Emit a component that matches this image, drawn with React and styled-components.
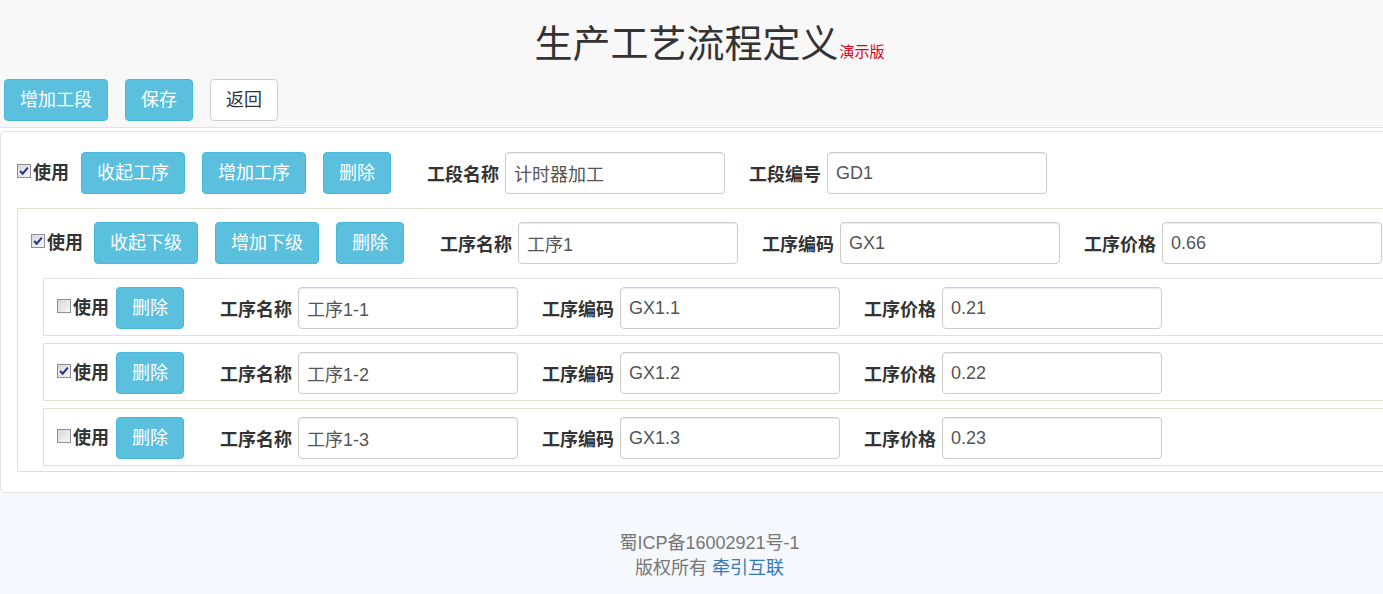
import React from 'react'
import styled, { createGlobalStyle } from 'styled-components'

const GlobalStyle = createGlobalStyle`
  html, body {
    margin: 0;
    padding: 0;
    overflow: hidden;
    background: #f5f8fc;
  }
  body {
    font-family: "Liberation Sans", "Noto Sans CJK SC", sans-serif;
    color: #333;
  }
`;

const Header = styled.div`
  background: #f8f8f8;
  border-bottom: 1px solid #dbe5ee;
  padding: 25px 0 6px 4px;
`;
const TitleWrap = styled.div`
  display: flex;
  justify-content: center;
  padding-right: 14px;
`;
const Title = styled.h1`
  position: relative;
  margin: 0;
  font-size: 38px;
  line-height: 38px;
  font-weight: normal;
  color: #333;
`;
const Demo = styled.small`
  position: absolute;
  left: 100%;
  bottom: 4px;
  margin-left: 1px;
  font-size: 15px;
  line-height: 15px;
  color: #e0001b;
  white-space: nowrap;
`;
const Toolbar = styled.div`
  display: flex;
  gap: 17px;
  margin-top: 16px;
`;
const Button = styled.button`
  height: 42px;
  padding: 0 15px;
  margin-left: ${p => p.$ml || 0}px;
  border: 1px solid ${p => (p.$plain ? '#ccc' : '#46b8da')};
  border-radius: 4px;
  background: ${p => (p.$plain ? '#fff' : '#5bc0de')};
  color: ${p => (p.$plain ? '#333' : '#fff')};
  font-family: inherit;
  font-size: 18px;
  line-height: 40px;
  white-space: nowrap;
  flex-shrink: 0;
`;

const Main = styled.div`
  background: #fff;
  padding-top: 3px;
`;
const Panel = styled.div`
  width: 1420px;
  border: 1px solid #e3e3e3;
  border-radius: 4px;
  background: #fff;
  padding: 20px 0 20px 16px;
  box-sizing: border-box;
`;
const Row = styled.div`
  display: flex;
  align-items: center;
  height: 42px;
`;
const Check = styled.label`
  display: flex;
  align-items: center;
  gap: 2px;
  font-size: 18px;
  font-weight: bold;
  line-height: 24px;
  white-space: nowrap;
  flex-shrink: 0;
`;
const Box = styled.span`
  width: 14px;
  height: 14px;
  box-sizing: border-box;
  border: 1px solid #8d8f94;
  background: linear-gradient(135deg, #d8d8d8, #f7f7f7);
  margin-bottom: 4px;
  display: flex;
  align-items: center;
  justify-content: center;
`;
const Fields = styled.div`
  display: flex;
  gap: 24px;
  margin-left: 36px;
`;
const Field = styled.label`
  display: flex;
  align-items: center;
  gap: 6px;
  flex-shrink: 0;
`;
const FieldLabel = styled.span`
  font-size: 18px;
  font-weight: bold;
  white-space: nowrap;
`;
const Input = styled.input`
  width: 220px;
  height: 42px;
  box-sizing: border-box;
  padding: 0 8px;
  border: 1px solid #ccc;
  border-radius: 4px;
  box-shadow: inset 0 1px 1px rgba(0, 0, 0, 0.075);
  font-family: inherit;
  font-size: 18px;
  color: #555;
  background: #fff;
  outline: none;
`;
const Group = styled.div`
  margin-top: 14px;
  border: 1px solid #dfe3d4;
  padding: 13px 0 5px 13px;
`;
const SubList = styled.div`
  display: flex;
  flex-direction: column;
  gap: 7px;
  margin: 14px 0 0 12px;
`;
const SubItem = styled.div`
  border: 1px solid #dfe3d4;
  padding: 8px 0 6px 13px;
`;

const Footer = styled.div`
  padding: 38px 0 13px 36px;
  text-align: center;
  font-size: 18px;
  line-height: 25px;
  color: #777;
`;
const FooterLink = styled.a`
  color: #337ab7;
  text-decoration: none;
`;

function CheckBox({ checked, children }) {
  return (
    <Check>
      <Box>
        {checked && (
          <svg width="12" height="12" viewBox="0 0 11 11">
            <path d="M2 5.5 L4.3 8 L9 2.5" fill="none" stroke="#27328a" strokeWidth="1.8" />
          </svg>
        )}
      </Box>
      {children}
    </Check>
  );
}

function InputField({ label, value }) {
  return (
    <Field>
      <FieldLabel>{label}</FieldLabel>
      <Input defaultValue={value} readOnly />
    </Field>
  );
}

const stage = {
  name: '计时器加工',
  code: 'GD1',
  process: {
    name: '工序1',
    code: 'GX1',
    price: '0.66',
    children: [
      { name: '工序1-1', code: 'GX1.1', price: '0.21', checked: false },
      { name: '工序1-2', code: 'GX1.2', price: '0.22', checked: true },
      { name: '工序1-3', code: 'GX1.3', price: '0.23', checked: false },
    ],
  },
};

export default function App() {
  const { process } = stage;
  return (
    <>
      <GlobalStyle />
      <Header>
        <TitleWrap>
          <Title>
            生产工艺流程定义<Demo>演示版</Demo>
          </Title>
        </TitleWrap>
        <Toolbar>
          <Button>增加工段</Button>
          <Button>保存</Button>
          <Button $plain>返回</Button>
        </Toolbar>
      </Header>

      <Main>
        <Panel>
          <Row>
            <CheckBox checked>使用</CheckBox>
            <Button $ml={12}>收起工序</Button>
            <Button $ml={17}>增加工序</Button>
            <Button $ml={17}>删除</Button>
            <Fields>
              <InputField label="工段名称" value={stage.name} />
              <InputField label="工段编号" value={stage.code} />
            </Fields>
          </Row>

          <Group>
            <Row>
              <CheckBox checked>使用</CheckBox>
              <Button $ml={11}>收起下级</Button>
              <Button $ml={17}>增加下级</Button>
              <Button $ml={17}>删除</Button>
              <Fields>
                <InputField label="工序名称" value={process.name} />
                <InputField label="工序编码" value={process.code} />
                <InputField label="工序价格" value={process.price} />
              </Fields>
            </Row>

            <SubList>
              {process.children.map(item => (
                <SubItem key={item.code}>
                  <Row>
                    <CheckBox checked={item.checked}>使用</CheckBox>
                    <Button $ml={7}>删除</Button>
                    <Fields>
                      <InputField label="工序名称" value={item.name} />
                      <InputField label="工序编码" value={item.code} />
                      <InputField label="工序价格" value={item.price} />
                    </Fields>
                  </Row>
                </SubItem>
              ))}
            </SubList>
          </Group>
        </Panel>
      </Main>

      <Footer>
        <div>蜀ICP备16002921号-1</div>
        <div>
          版权所有 <FooterLink href="#">牵引互联</FooterLink>
        </div>
      </Footer>
    </>
  );
}
